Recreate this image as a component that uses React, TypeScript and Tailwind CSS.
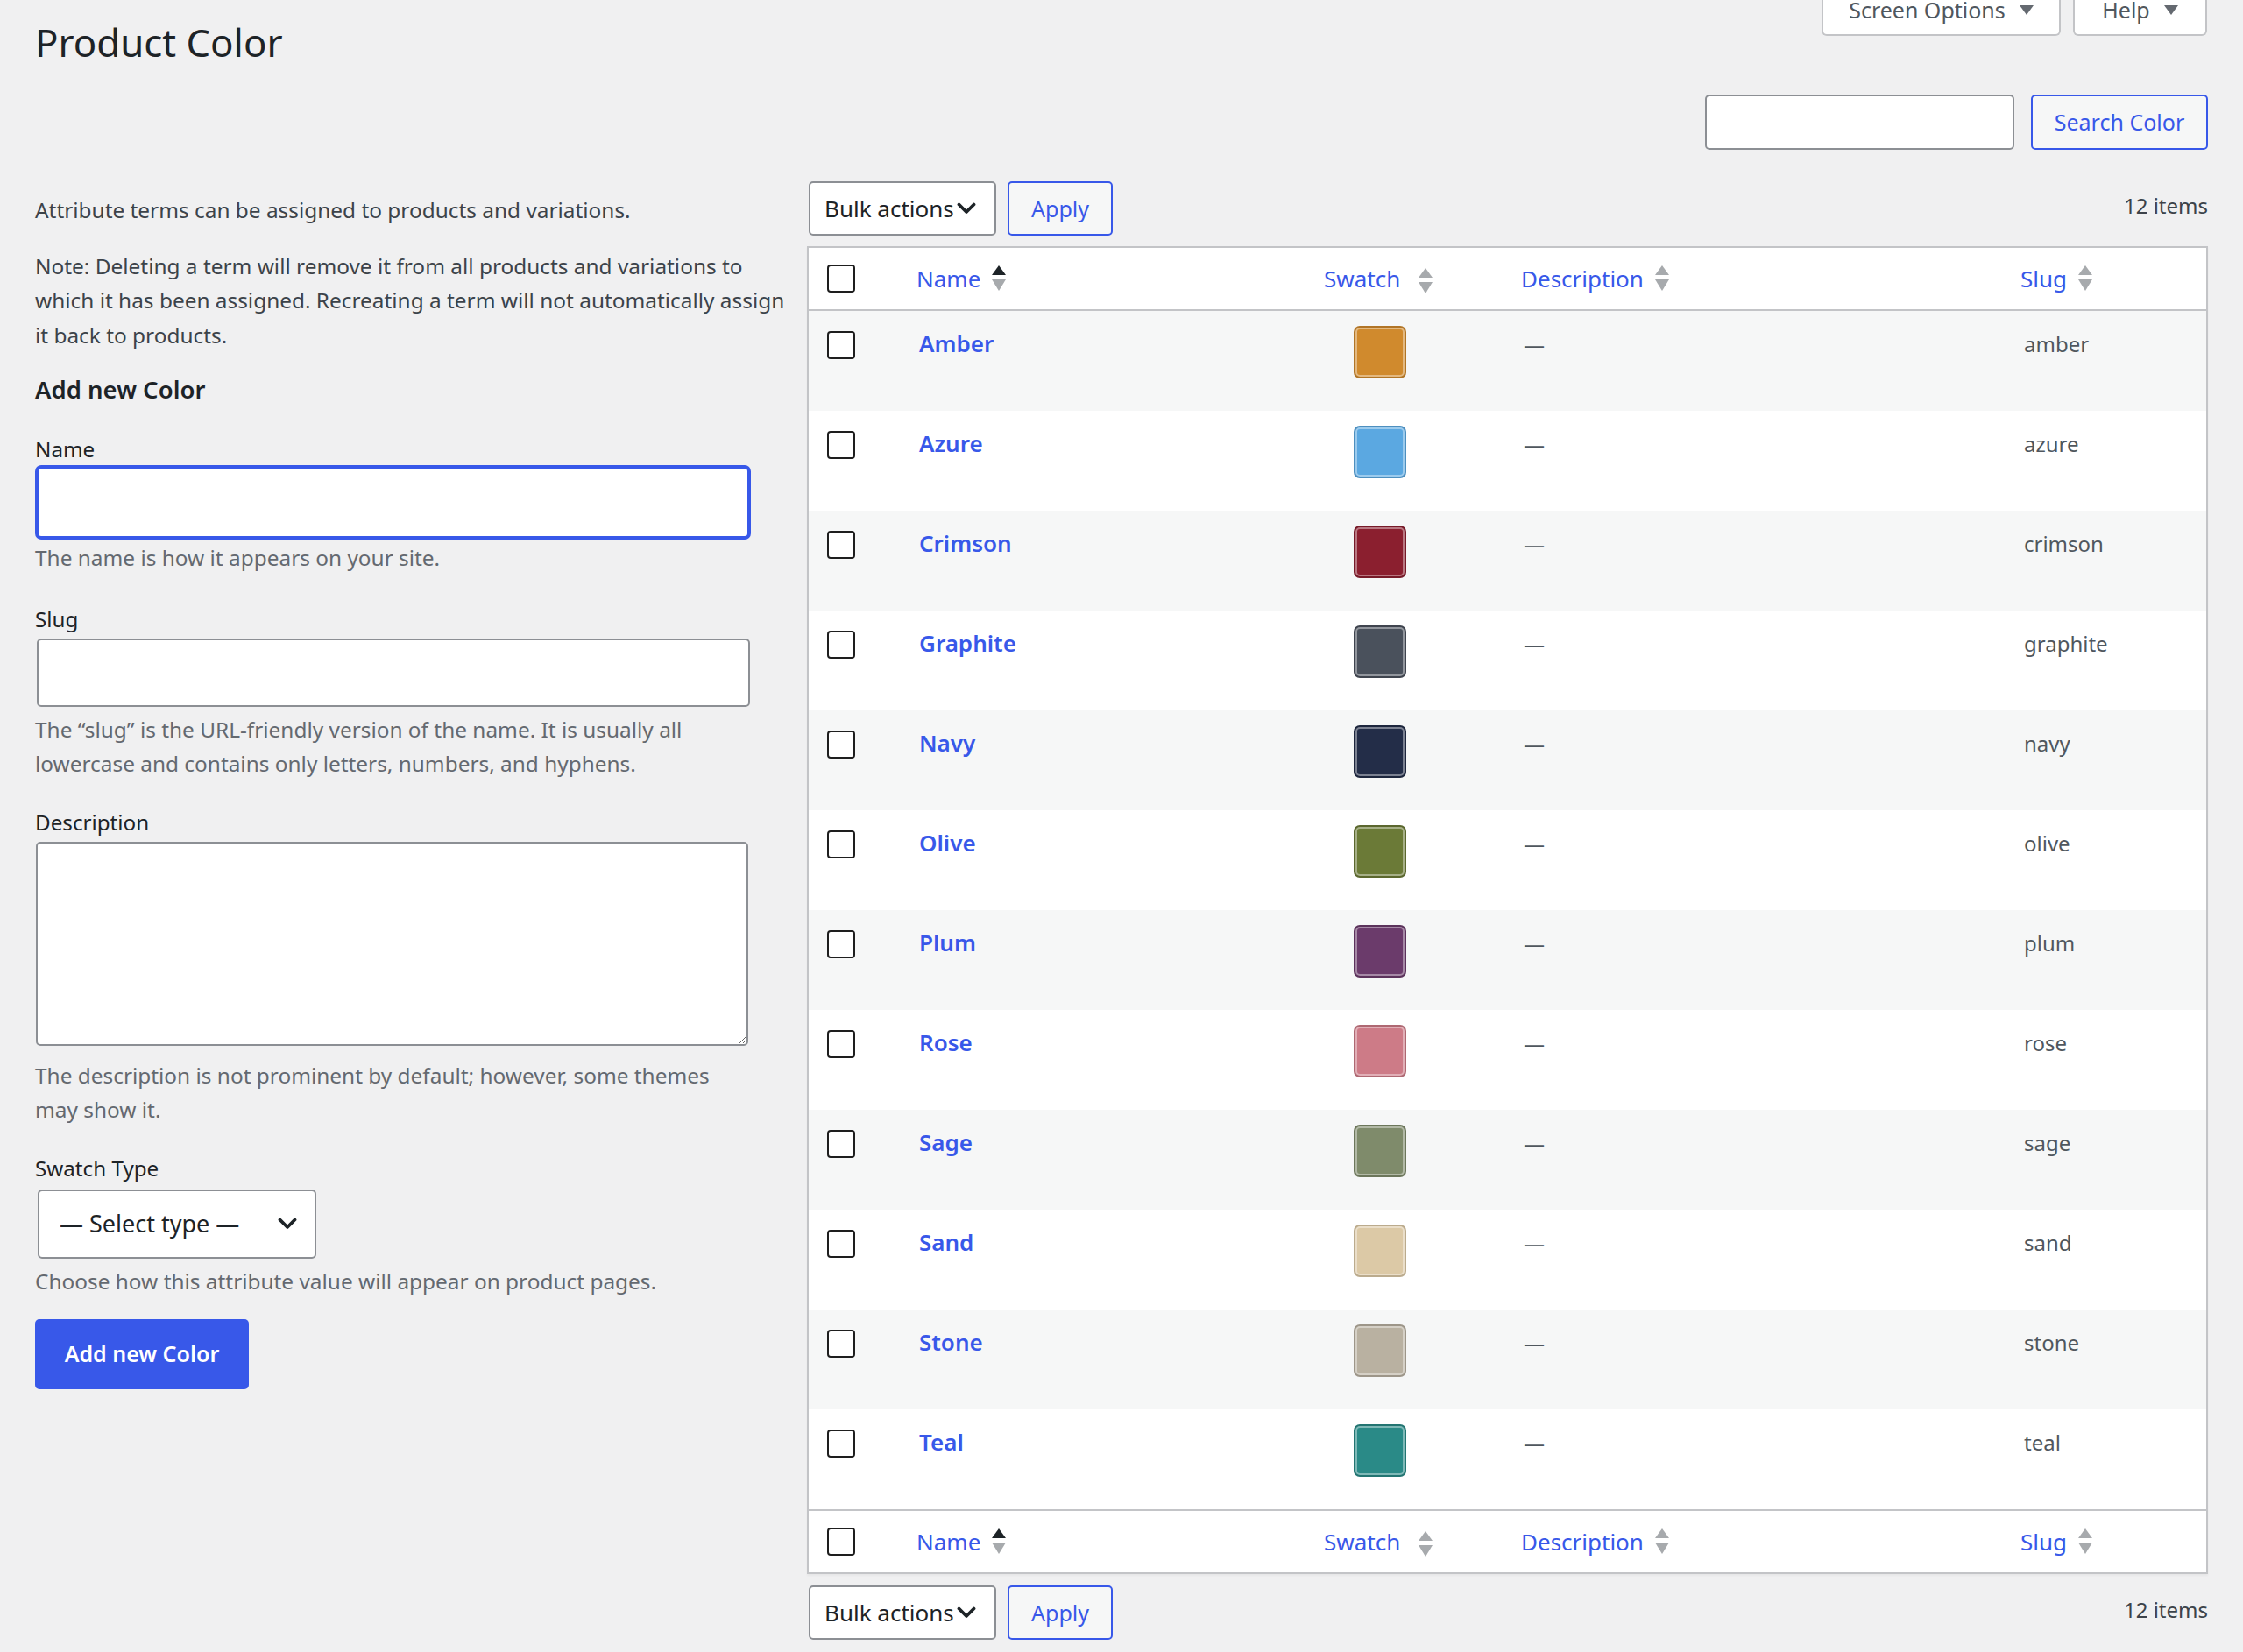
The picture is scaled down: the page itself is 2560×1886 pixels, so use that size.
import React from 'react';

const terms = [
  { name: 'Amber', slug: 'amber', color: '#d08a2d' },
  { name: 'Azure', slug: 'azure', color: '#5ba8e1' },
  { name: 'Crimson', slug: 'crimson', color: '#8b1f2f' },
  { name: 'Graphite', slug: 'graphite', color: '#4a515c' },
  { name: 'Navy', slug: 'navy', color: '#232d48' },
  { name: 'Olive', slug: 'olive', color: '#6b7a37' },
  { name: 'Plum', slug: 'plum', color: '#6b3b6b' },
  { name: 'Rose', slug: 'rose', color: '#cd7b87' },
  { name: 'Sage', slug: 'sage', color: '#7f8b6b' },
  { name: 'Sand', slug: 'sand', color: '#dcc9a6' },
  { name: 'Stone', slug: 'stone', color: '#b9b1a1' },
  { name: 'Teal', slug: 'teal', color: '#2a8a87' },
];

function Checkbox() {
  return <span className="block w-[32px] h-[32px] border-2 border-[#1e1e1e] rounded-[4px] bg-white" />;
}

function SortIcon({ active }: { active?: boolean }) {
  return (
    <svg width="16" height="30" viewBox="0 0 16 30" className="shrink-0">
      <polygon points="8,0 16,11 0,11" fill={active ? '#1d2327' : '#a7aaad'} />
      <polygon points="0,16 16,16 8,29" fill="#a7aaad" />
    </svg>
  );
}

function Chevron() {
  return (
    <svg width="22" height="14" viewBox="0 0 22 14" className="shrink-0">
      <polyline points="2.5,2.5 11,11 19.5,2.5" fill="none" stroke="#1d2327" strokeWidth="3.8" strokeLinecap="round" strokeLinejoin="round" />
    </svg>
  );
}

function Triangle() {
  return (
    <svg width="16" height="11" viewBox="0 0 16 11" className="shrink-0">
      <polygon points="0,0 16,0 8,11" fill="#646970" />
    </svg>
  );
}

function HeaderRow({ top }: { top?: boolean }) {
  return (
    <div
      className={`grid grid-cols-[107px_463px_227px_569px_1fr] h-[72px] items-center bg-white ${
        top ? 'border-b-2' : 'border-t-2'
      } border-[#c3c4c7] text-[26px] leading-[36px] text-[#3858e9]`}
    >
      <div className="pl-[21px]">
        <Checkbox />
      </div>
      <div className="pl-[16px] flex items-center gap-[13px]">
        <span>Name</span>
        <SortIcon active />
      </div>
      <div className="pl-[18px] flex items-center gap-[21px]">
        <span>Swatch</span>
        <span className="mt-[5px]">
          <SortIcon />
        </span>
      </div>
      <div className="pl-[16px] flex items-center gap-[13px]">
        <span>Description</span>
        <SortIcon />
      </div>
      <div className="pl-[17px] flex items-center gap-[13px]">
        <span>Slug</span>
        <SortIcon />
      </div>
    </div>
  );
}

function TableNav() {
  return (
    <div className="flex justify-between h-[62px]">
      <div className="flex gap-[13px] ml-[2px]">
        <div className="w-[214px] h-[62px] bg-white border-2 border-[#8c8f94] rounded-[5px] flex items-center justify-between pl-[16px] pr-[21px] text-[26px] text-[#1d2327]">
          <span className="leading-[36px]">Bulk actions</span>
          <Chevron />
        </div>
        <div className="w-[120px] h-[62px] bg-[#f6f7f7] border-2 border-[#3858e9] rounded-[5px] flex items-center justify-center text-[25px] leading-[36px] text-[#3858e9]">
          Apply
        </div>
      </div>
      <div className="mt-[8px] text-[24px] leading-[39.5px] text-[#3c434a]">12 items</div>
    </div>
  );
}

export default function App() {
  return (
    <div className="min-h-screen bg-[#f0f0f1] font-['Noto_Sans',sans-serif] px-[40px] pb-[14px] text-[#3c434a]">
      {/* Title row */}
      <div className="flex justify-between items-start h-[76px]">
        <h1 className="mt-[20px] text-[43.8px] leading-[56px] font-normal text-[#1d2327]">Product Color</h1>
        <div className="flex gap-[14px] mr-[1px]">
          <div className="w-[273px] h-[41px] bg-white border-2 border-t-0 border-[#c3c4c7] rounded-b-[6px] flex justify-center items-start gap-[16px] text-[25px] leading-[23px] text-[#50575e]">
            <span>Screen Options</span>
            <span className="h-[22px] flex items-center"><Triangle /></span>
          </div>
          <div className="w-[153px] h-[41px] bg-white border-2 border-t-0 border-[#c3c4c7] rounded-b-[6px] flex justify-center items-start gap-[16px] text-[25px] leading-[23px] text-[#50575e]">
            <span>Help</span>
            <span className="h-[22px] flex items-center"><Triangle /></span>
          </div>
        </div>
      </div>

      {/* Search row */}
      <div className="flex justify-end gap-[19px] mt-[32px]">
        <div className="w-[353px] h-[63px] bg-white border-2 border-[#8c8f94] rounded-[5px]" />
        <div className="w-[202px] h-[63px] bg-[#f6f7f7] border-2 border-[#3858e9] rounded-[5px] flex items-center justify-center text-[25px] text-[#3858e9]">
          Search Color
        </div>
      </div>

      {/* Columns */}
      <div className="flex">
        {/* Left column */}
        <div className="w-[868px] shrink-0 pt-[49px] flex flex-col items-start">
          <p className="text-[24.4px] leading-[39.5px]">Attribute terms can be assigned to products and variations.</p>
          <p className="mt-[24px] text-[24.4px] leading-[39.5px]">
            Note: Deleting a term will remove it from all products and variations to which it has been assigned.
            Recreating a term will not automatically assign it back to products.
          </p>
          <h2 className="mt-[25px] text-[27.5px] leading-[36px] font-semibold text-[#1d2327]">Add new Color</h2>

          <label className="mt-[34px] text-[24.2px] leading-[32px] text-[#1d2327]">Name</label>
          <div className="mt-[4px] ml-[2px] w-[813px] h-[81px] bg-white border-2 border-[#3858e9] rounded-[5px] shadow-[0_0_0_2px_#3858e9]" />
          <p className="mt-[3px] w-[815px] text-[24.4px] leading-[39.5px] text-[#646970]">The name is how it appears on your site.</p>

          <label className="mt-[34px] text-[24.2px] leading-[32px] text-[#1d2327]">Slug</label>
          <div className="mt-[6px] ml-[2px] w-[814px] h-[78px] bg-white border-2 border-[#8c8f94] rounded-[5px]" />
          <p className="mt-[6px] w-[815px] text-[24.4px] leading-[39.5px] text-[#646970]">
            The “slug” is the URL-friendly version of the name. It is usually all lowercase and contains only letters,
            numbers, and hyphens.
          </p>

          <label className="mt-[31px] text-[24.2px] leading-[32px] text-[#1d2327]">Description</label>
          <textarea
            readOnly
            className="mt-[6px] ml-[1px] block w-[813px] h-[233px] bg-white border-2 border-[#8c8f94] rounded-[5px] outline-none"
          />
          <p className="mt-[14px] w-[815px] text-[24.4px] leading-[39.5px] text-[#646970]">
            The description is not prominent by default; however, some themes may show it.
          </p>

          <label className="mt-[31px] text-[24.2px] leading-[32px] text-[#1d2327]">Swatch Type</label>
          <div className="mt-[8px] ml-[3px] w-[318px] h-[79px] bg-white border-2 border-[#8c8f94] rounded-[5px] flex items-center justify-between pl-[23px] pr-[20px] text-[27px] text-[#1d2327]">
            <span className="leading-[36px]">— Select type —</span>
            <Chevron />
          </div>
          <p className="mt-[6px] w-[815px] text-[24.4px] leading-[39.5px] text-[#646970]">
            Choose how this attribute value will appear on product pages.
          </p>

          <div className="mt-[23.5px] w-[244px] h-[80px] bg-[#3858e9] rounded-[5px] flex items-center justify-center text-[25px] font-semibold text-white">
            Add new Color
          </div>
        </div>

        {/* Right column */}
        <div className="flex-1 pl-[13px] pt-[36px]">
          <TableNav />
          <div className="mt-[12px] border-2 border-[#c3c4c7] bg-white shadow-[0_2px_2px_rgba(0,0,0,0.04)]">
            <HeaderRow top />
            {terms.map((t, i) => (
              <div
                key={t.slug}
                className={`grid grid-cols-[107px_463px_227px_569px_1fr] h-[114px] items-start ${
                  i % 2 === 0 ? 'bg-[#f6f7f7]' : 'bg-white'
                }`}
              >
                <div className="pl-[21px] pt-[23px]">
                  <Checkbox />
                </div>
                <div className="pl-[19px] pt-[19px] text-[26px] leading-[36px] font-semibold text-[#3858e9]">{t.name}</div>
                <div className="pl-[52px] pt-[17px]">
                  <span
                    className="block w-[60px] h-[60px] rounded-[7px] border-2 border-black/15 shadow-[inset_0_0_0_2px_rgba(255,255,255,0.4)]"
                    style={{ backgroundColor: t.color }}
                  />
                </div>
                <div className="pl-[19px] pt-[20px] text-[24px] leading-[36px] text-[#50575e]">—</div>
                <div className="pl-[21px] pt-[20px] text-[24px] leading-[36px] text-[#50575e]">{t.slug}</div>
              </div>
            ))}
            <HeaderRow />
          </div>
          <div className="mt-[13px]">
            <TableNav />
          </div>
        </div>
      </div>
    </div>
  );
}
